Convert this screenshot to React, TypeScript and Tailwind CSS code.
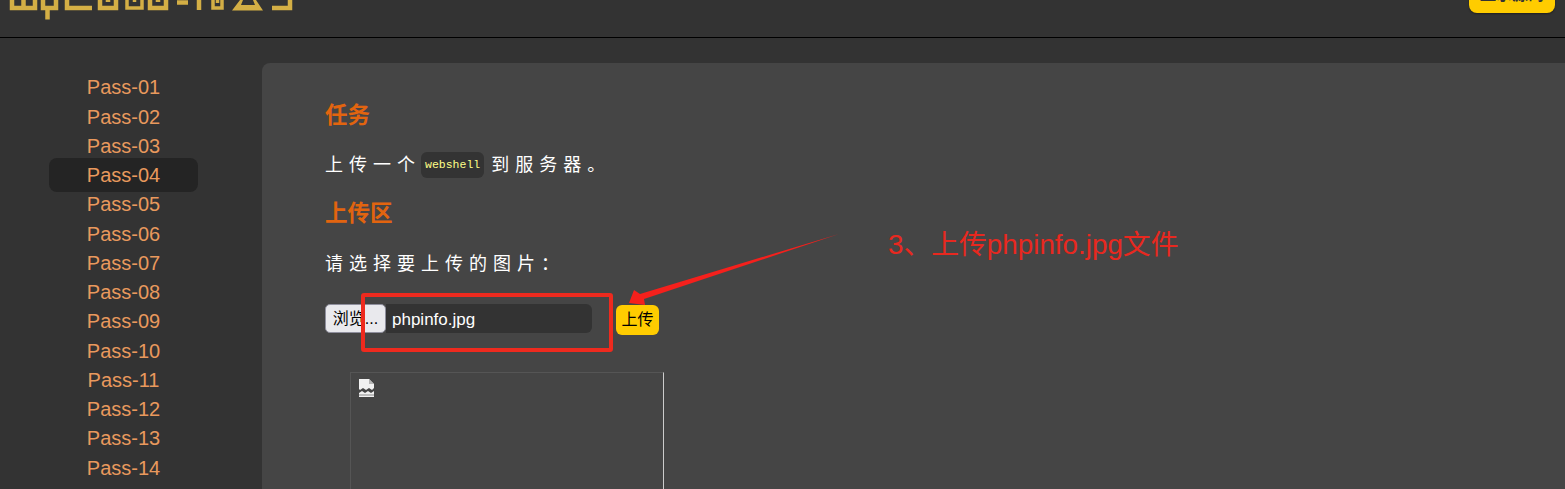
const passes = ["01", "02", "03", "04", "05", "06", "07", "08", "09", "10", "11", "12", "13", "14"];

function Logo() {
  // only the bottom of the logo is on screen
  return (
    <svg width="296" height="22" viewBox="0 0 296 22" className="absolute left-0 top-0" fill="none" stroke="#d4af45" strokeWidth="4.500">
      <path d="M12 0v8h23v-8M23.500 0v8" />
      <path d="M43 0v8h13v-8M47.500 8v11.500" />
      <path d="M67 0v8h25" />
      <path d="M100 0v8h16v-8M108 0v2" />
      <path d="M127 0v8h15v-8M134.500 0v2" strokeWidth="3.500" />
      <path d="M150 0v8h16v-8M158 0v2" />
      <path d="M177 2.500h11" />
      <path d="M199 0v10" />
      <path d="M213 0v8h9v-8M217.500 0v3" strokeWidth="3.500" />
      <path d="M232 10.500l8-10.500h3l-2 5h14l-2-5h3l7 10.500z" fill="#d4af45" stroke="none" />
      <path d="M272 8h18v-8" />
    </svg>
  );
}

function BrokenImage() {
  return (
    <svg width="18" height="18" viewBox="0 0 18 18" className="absolute left-[7px] top-[6px]">
      <path d="M1 0h10l5 5v4l-2 2-3-2-3 2-3-2-3 2-1-1z" fill="#f1f1f1" />
      <path d="M11 0v5h5" fill="#b5b5b5" />
      <path d="M1 14l3-2 3 2 3-2 3 2 3-2v6h-15z" fill="#f1f1f1" />
      <path d="M1 16h15" stroke="#8a8a8a" strokeWidth="1" />
    </svg>
  );
}

export default function App() {
  return (
    <div className="h-[489px] w-[1565px] overflow-hidden bg-[#333333] font-['Liberation_Sans','Noto_Sans_CJK_SC',sans-serif]">
      {/* header */}
      <header className="relative h-[38px] border-b border-black">
        <Logo />
        <div className="absolute right-[10px] top-[-18px] flex h-[31px] w-[86px] items-end justify-center rounded-lg bg-[#ffcc00] pb-[10px] text-[16px] leading-[16px] font-bold text-[#333333] shadow-[0_1px_2px_rgba(0,0,0,0.4)]">
          显示源码
        </div>
      </header>

      <div className="flex">
        {/* sidebar */}
        <nav className="w-[262px] shrink-0 pl-[49px] pr-[64px] pt-[34.700px]">
          {passes.map((p) => (
            <div
              key={p}
              className={
                p === "04"
                  ? "-my-[2.375px] flex h-[34px] items-center justify-center rounded-lg bg-[#242424] text-[20px] text-[#e9995d]"
                  : "flex h-[29.250px] items-center justify-center text-[20px] text-[#e9995d]"
              }
            >
              Pass-{p}
            </div>
          ))}
        </nav>

        {/* content */}
        <main className="relative mt-[25px] h-[500px] flex-1 rounded-tl-lg bg-[#454545] pl-[63px] pt-[38px]">
          <h2 className="text-[22.500px] leading-[30px] font-bold text-[#e2640f]">任务</h2>
          <p className="mt-[19px] flex h-[30px] items-center text-[18px] tracking-[6px] text-white">
            上传一个
            <code className="mr-[7px] rounded-md bg-[#333333] px-[4px] py-[4px] font-['Liberation_Mono',monospace] text-[11.500px] tracking-normal text-[#ffff88]">
              webshell
            </code>
            到服务器。
          </p>
          <h2 className="mt-[19px] text-[22.500px] leading-[30px] font-bold text-[#e2640f]">上传区</h2>
          <p className="mt-[20px] h-[30px] text-[18px] leading-[30px] tracking-[6px] text-white">请选择要上传的图片：</p>

          <div className="mt-[25px] flex h-[29px] items-start">
            <div className="flex h-[29px] w-[61px] items-center justify-center rounded-[5px] border border-[#8f8f9d] bg-[#e9e9ed] pt-[1px] text-[16px] text-black">
              浏览...
            </div>
            <div className="flex h-[29px] w-[206px] items-center rounded-r-md bg-[#333333] pl-[6px] pt-[2px] text-[17px] text-white">
              phpinfo.jpg
            </div>
            <button className="ml-[24px] mt-[1px] h-[30px] w-[43px] rounded-md bg-[#ffcc00] text-[16px] text-black">上传</button>
          </div>

          <div className="relative ml-[25px] mt-[39px] h-[200px] w-[314px] border-t border-r border-l border-[#555555] border-r-[#cccccc]">
            <BrokenImage />
          </div>

          {/* annotations on top of the screenshot */}
          <div className="absolute left-[99px] top-[230px] h-[59px] w-[252px] rounded-[3px] border-[4px] border-[#ee2a1e]" />
          <svg width="220" height="80" viewBox="0 0 220 80" className="absolute left-[360px] top-[170px]">
            <path d="M217 1L18 61L12 57L7 70L23 72L22 66Z" fill="#f5201c" />
          </svg>
          <span className="absolute left-[626px] top-[161px] text-[27.800px] text-[#e8281f]">3、上传phpinfo.jpg文件</span>
        </main>
      </div>
    </div>
  );
}
